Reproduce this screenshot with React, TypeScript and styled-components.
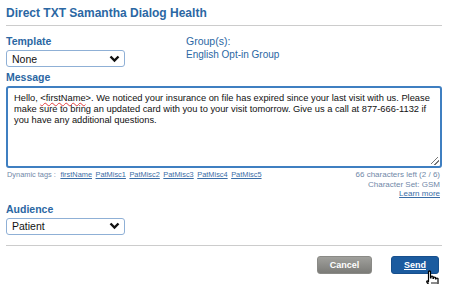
import styled, { createGlobalStyle } from 'styled-components'

const GlobalStyle = createGlobalStyle`
  html, body {
    margin: 0;
    padding: 0;
    background: #fff;
    font-family: "Liberation Sans", Arial, sans-serif;
  }
`

const blue = '#2b67a3'

const tags = ['firstName', 'PatMisc1', 'PatMisc2', 'PatMisc3', 'PatMisc4', 'PatMisc5']

const Chevron = () => (
  <svg width="11" height="8" viewBox="0 0 11 8">
    <path d="M1.5 1.5 L5.5 5.5 L9.5 1.5" fill="none" stroke="#111" strokeWidth="2.4" />
  </svg>
)

const HandCursor = () => (
  <svg width="17" height="19" viewBox="0 0 17 19">
    <path
      d="M5.5 1.5 Q6.5 0.5 7.5 1.5 V8 H8 V6.5 Q9 5.8 10 6.5 V8.5 H10.5 V7.5 Q11.5 6.8 12.5 7.5 V9 H13 V8.5 Q14 7.8 15 8.5 V13 Q15 16 13 17.5 H8 Q7 16 4 12.5 Q3.2 11 4.5 10.8 L5.5 11.8 Z"
      fill="#fff"
      stroke="#000"
      strokeWidth="1.2"
      strokeLinejoin="round"
    />
    <path d="M9 12 V15 M11 12 V15 M13 12 V15" stroke="#000" strokeWidth="0.9" />
  </svg>
)

const App = () => {
  return (
    <>
      <GlobalStyle />
      <Dialog>
        <Title>Direct TXT Samantha Dialog Health</Title>
        <Rule />
        <TopRow>
          <Field>
            <Label>Template</Label>
            <Select>
              <span>None</span>
              <Chevron />
            </Select>
          </Field>
          <Field>
            <GroupLabel>Group(s):</GroupLabel>
            <GroupValue>English Opt-in Group</GroupValue>
          </Field>
        </TopRow>
        <Label>Message</Label>
        <MessageBox>
          <Line>
            Hello, <Squiggle>&lt;firstName</Squiggle>&gt;. We noticed your insurance on file has expired since your last visit with us. Please
          </Line>
          <Line>make sure to bring an updated card with you to your visit tomorrow. Give us a call at 877-666-1132 if</Line>
          <Line>you have any additional questions.</Line>
          <Grip />
        </MessageBox>
        <InfoRow>
          <Tags>
            <span>Dynamic tags :</span>
            {tags.map((t) => (
              <TagLink key={t}>{t}</TagLink>
            ))}
          </Tags>
          <Counter>
            <span>66 characters left (2 / 6)</span>
            <span>Character Set: GSM</span>
            <TagLink>Learn more</TagLink>
          </Counter>
        </InfoRow>
        <Label>Audience</Label>
        <Select>
          <span>Patient</span>
          <Chevron />
        </Select>
        <Rule spaced />
        <Actions>
          <Button variant="cancel">Cancel</Button>
          <Button variant="send">
            <u>Send</u>
          </Button>
        </Actions>
        <Cursor>
          <HandCursor />
        </Cursor>
      </Dialog>
    </>
  )
}
export default App

const Dialog = styled.div`
  position: relative;
  width: 436px;
  height: 278px;
  padding: 6px 8px 0 6px;
  display: flex;
  flex-direction: column;
  font-size: 11px;
`

const Title = styled.div`
  font-size: 12px;
  font-weight: bold;
  color: ${blue};
  line-height: 15px;
`

const Rule = styled.div<{ spaced?: boolean }>`
  height: 1px;
  background: #cccccc;
  margin: ${({ spaced }) => (spaced ? '6px 0 10px' : '4px 0 9px')};
`

const TopRow = styled.div`
  display: grid;
  grid-template-columns: 180px 1fr;
`

const Field = styled.div`
  display: flex;
  flex-direction: column;
`

const Label = styled.div`
  color: ${blue};
  font-weight: bold;
  font-size: 10.5px;
  line-height: 13px;
  margin-bottom: 2px;
`

const GroupLabel = styled.div`
  color: ${blue};
  font-size: 10.5px;
  line-height: 13px;
`

const GroupValue = styled.div`
  color: ${blue};
  font-size: 10px;
  line-height: 13px;
`

const Select = styled.div`
  width: 119px;
  height: 17px;
  box-sizing: border-box;
  border: 1px solid #8fb0d6;
  border-radius: 3px;
  display: flex;
  align-items: center;
  justify-content: space-between;
  padding: 0 4px 0 5px;
  font-size: 10.5px;
  color: #111;
  margin-bottom: 4px;
`

const MessageBox = styled.div`
  position: relative;
  height: 82px;
  box-sizing: border-box;
  border: 2px solid #3f7fc1;
  border-radius: 3px;
  padding: 5px 6px;
  font-size: 9.3px;
  line-height: 11px;
  color: #111;
`

const Line = styled.div`
  white-space: nowrap;
`

const Squiggle = styled.span`
  text-decoration: underline wavy #e04040;
  text-decoration-thickness: 1px;
  text-underline-offset: 1px;
`

const Grip = styled.div`
  position: absolute;
  right: 1px;
  bottom: 1px;
  width: 8px;
  height: 8px;
  background: linear-gradient(
    135deg,
    transparent 40%,
    #777 40%,
    #777 48%,
    transparent 48%,
    transparent 68%,
    #777 68%,
    #777 76%,
    transparent 76%
  );
`

const InfoRow = styled.div`
  display: flex;
  justify-content: space-between;
  align-items: flex-start;
  font-size: 7.4px;
  color: #7088a8;
  margin: 2px 0 4px;
`

const Tags = styled.div`
  display: flex;
  gap: 3.5px;
  padding-left: 1px;

  span {
    margin-right: 1px;
  }
`

const TagLink = styled.a`
  color: #3a6da6;
  text-decoration: underline;
`

const Counter = styled.div`
  display: flex;
  flex-direction: column;
  align-items: flex-end;
  font-size: 8px;
  line-height: 9.5px;
  padding-right: 2px;
`

const Actions = styled.div`
  display: flex;
  justify-content: flex-end;
  gap: 19px;
  padding-right: 3px;
`

const Button = styled.div<{ variant: 'cancel' | 'send' }>`
  height: 18px;
  box-sizing: border-box;
  border-radius: 3px;
  display: flex;
  align-items: center;
  justify-content: center;
  font-size: 9px;
  font-weight: bold;
  color: #fff;
  width: ${({ variant }) => (variant === 'cancel' ? '55px' : '48px')};
  background: ${({ variant }) =>
    variant === 'cancel' ? 'linear-gradient(#a0a09c, #7b7b77)' : '#1b5b9f'};
  border: 1px solid ${({ variant }) => (variant === 'cancel' ? '#8a8a86' : '#174f8c')};
`

const Cursor = styled.div`
  position: absolute;
  left: 423px;
  top: 270px;
  z-index: 5;
  line-height: 0;
`
